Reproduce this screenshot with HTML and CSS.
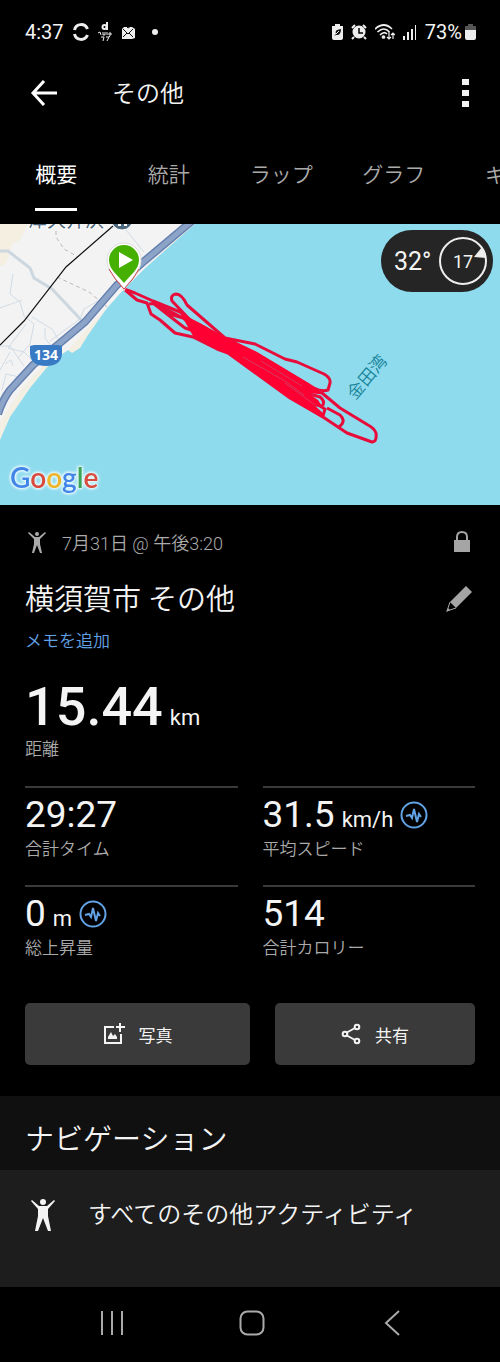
FILE: index.html
```
<!DOCTYPE html>
<html lang="ja">
<head>
  <meta charset="UTF-8">
  <meta name="viewport" content="width=device-width, initial-scale=1">
  <title>横須賀市 その他</title>
  <link rel="stylesheet" href="styles.css">
</head>
<body>
  <div class="status-bar">
    <div class="status-group">
      <span class="clock">4:37</span>
      <svg width="16" height="18" viewBox="0 0 16 18" fill="none" stroke="#eee" stroke-width="3"><path d="M1.500 7C3 0 12 0 14.500 6M1.500 11C3 18 12 18 14.500 12"/></svg>
      <svg width="14" height="20" viewBox="0 0 14 20" fill="none" stroke="#eee" stroke-width="1"><circle cx="6.500" cy="5" r="2" stroke-width="2"/><path d="M9 0v8" stroke-width="2"/><path d="M0 11l2-1 1 3M5 10v3h2v-3M9 10v3M11 11h2v2h-2zM3 15h3l-1 4M8 15h3l-2 4M11 14l1 1"/></svg>
      <svg width="14" height="15" viewBox="0 0 14 15"><path d="M1 4l2-2h8l3 2v9l-3 1H1z" fill="#eee"/><path d="M2 4l5 5 5-5M2 12l4-4M12 12L8 8M5 1l2 2 3-2" fill="none" stroke="#111"/></svg>
      <span class="status-dot"></span>
    </div>
    <div class="status-group status-right">
      <svg width="11" height="16" viewBox="0 0 11 16"><path d="M3 0h5v2h3v12q0 2-2 2H2q-2 0-2-2V2h3z" fill="#eee"/><path d="M2 12l2-2q-1-3 1-4l4-1q0 5-3 6H4" fill="#111"/><path d="M4 10l3-3" stroke="#eee"/></svg>
      <svg width="16" height="16" viewBox="0 0 16 16"><circle cx="8" cy="8" r="6.500" fill="#eee"/><path d="M1 4l3-3M15 4l-3-3M3 13l-2 2M13 13l2 2" stroke="#eee" stroke-width="2"/><path d="M8 4v5h4" fill="none" stroke="#000" stroke-width="1.500"/></svg>
      <svg width="20" height="17" viewBox="0 0 20 17" fill="none" stroke="#eee" stroke-width="1.700"><path d="M0 5Q9-3 17 5M2.500 8Q9 2 14.500 8M5 11Q9 7 12 10"/><circle cx="8.500" cy="13" r="1" fill="#eee"/><path d="M14 8v7M12 13l2 2 2-2M18 15V9M16 11l2-2 2 2" stroke-width="1.200"/></svg>
      <svg width="14" height="16" viewBox="0 0 14 16" fill="#eee"><path d="M0 12h2v4H0zM4 8h2v8H4zM8 5h2v11H8zM12 1h1v15h-1z"/></svg>
      <span class="battery">73%<svg width="11" height="16" viewBox="0 0 11 16"><path d="M3 0h5v2h3v5H0V2h3z" fill="#555"/><path d="M0 6h11v8q0 2-2 2H2q-2 0-2-2z" fill="#eee"/></svg></span>
    </div>
  </div>

  <header class="app-bar">
    <button class="icon-button" aria-label="戻る">
      <svg width="28" height="26" viewBox="0 0 28 26" fill="none" stroke="#fff" stroke-width="3"><path d="M14 1L3 13l11 12M3 13h24"/></svg>
    </button>
    <h1>その他</h1>
    <button class="icon-button menu-button" aria-label="メニュー">
      <svg width="8" height="28" viewBox="0 0 8 28" fill="#f4f4f4"><path d="M0 0h7v6H0zM0 11h7v6H0zM0 22h7v6H0z"/></svg>
    </button>
  </header>

  <nav class="tabs">
    <a href="#summary" class="tab active"><span>概要</span></a>
    <a href="#stats" class="tab"><span>統計</span></a>
    <a href="#laps" class="tab"><span>ラップ</span></a>
    <a href="#graph" class="tab"><span>グラフ</span></a>
    <a href="#gear" class="tab"><span>ギア</span></a>
  </nav>

  <div class="map">
    <svg class="map-canvas" viewBox="0 0 500 281" preserveAspectRatio="xMinYMin slice">
      <rect width="500" height="281" fill="#8fdbee"/>
      <!-- 陸地と砂浜 -->
      <path d="M0 0H195L143 46 123 66 107 84 88 111 80 124 72 129 68 126 53 136 30 164 10 193 0 216z" fill="#f4efe3"/>
      <path d="M0 0H192L143 46 123 66 107 84 86 106 68 126 45 140 22 164 0 198z" fill="#f3f3f3"/>
      <path d="M0 0H28L20 16 12 20 6 40 0 42z" fill="#f5efe1"/>
      <g fill="none" stroke="#d2dce5" stroke-width="1">
        <path d="M13 50l-3 20 10 8 4 14 10 8-4 20-12 14M0 84l22-8M32 93l20 12 8 13M26 100L8 124l16 4 10 10M50 117l30-22 4-10 24-14M126 6l18 22M0 122h10l14 20M0 146l10-18M2 166l4-16 18 4M45 104v10l6 8M5 140l6-4 2 6"/>
      </g>
      <path d="M0 27h8l22 17 4 10 18 11 32 34" fill="none" stroke="#ccd7df" stroke-width="3"/>
      <path d="M56 7v6l8 12 14 8M57 53l32 15 18 15" fill="none" stroke="#bbb" stroke-dasharray="4 3"/>
      <path d="M113 2L66 43 24 97 0 121" fill="none" stroke="#111" stroke-width="1.200"/>
      <path d="M192-3L142 39 117 61 85 98 60 119 33 141 10 166Q3 175-2 190" fill="none" stroke="#6681b0" stroke-width="8"/>
      <path d="M192-3L142 39 117 61 85 98 60 119 33 141 10 166Q3 175-2 190" fill="none" stroke="#8ca4c8" stroke-width="5"/>
      <text x="28" y="3" class="map-station">津久井浜</text>
      <circle cx="122" cy="-5" r="11" fill="#4d687c" stroke="#fff"/>
      <path d="M118 0h3v2h-3zM124 0h3v2h-3z" fill="#fff"/>
      <path d="M30 122l4-1h24l4 1v8q-1 12-16 12T30 130z" fill="#397ac4"/>
      <text x="46" y="136" class="map-route-no">134</text>

      <!-- 走行ルート -->
      <g fill="none" stroke="#e80c3b" stroke-width="3" stroke-linejoin="round">
        <path d="M124 65L135 69 153 77 180 88 197 101M225 114L255 120 285 135 297 138 324 150Q331 154 330 159L328 166Q322 168 314 164L257 130 225 114 187 81Q182 70 176 70Q170 71 172 77L195 101 225 116"/>
        <path d="M124 65L137 76 147 79 151 90 160 96 175 109 193 113 217 125 228 129 290 174 323 193 347 209 372 218Q377 218 376 209Q374 204 368 201L340 184 322 169 303 166"/>
        <path d="M153 79L172 94 185 104 197 108M149 80L157 79 170 90 183 94 195 103M160 82L185 95 200 104"/>
        <path d="M327 184L340 191Q345 196 342 200L338 204M303 168L320 173Q325 177 323 181Q320 184 303 176M318 181L325 185 323 192"/>
      </g>
      <path d="M180 89L200 99 225 113 257 128 310 160 322 170 308 169 318 176 322 182 313 180 324 190 322 194 290 175 228 130 216 125 193 112z" fill="#ff0033"/>
      <g fill="none" stroke="#d43a60" stroke-width="1">
        <path d="M261 137L302 162M243 133L285 157 304 171M285 159l30 22"/>
      </g>

      <path d="M124 67C120 55 107 50 107 36A17 17 0 0 1 141 36C141 50 128 55 124 67z" fill="#fff" stroke="#ddd"/>
      <path d="M109 45Q114 55 124 65Q134 55 139 45" fill="none" stroke="#c44"/>
      <path d="M124 59C118 51 109 46 109 36A15 15 0 0 1 139 36C139 46 130 51 124 59z" fill="#46b000"/>
      <path d="M119 28l14 8-14 8z" fill="#fff"/>
      <text x="367" y="153" class="map-bay" transform="rotate(-50 367 153)">金田湾</text>
      <text x="10" y="264" class="map-logo"><tspan fill="#4285e8">G</tspan><tspan fill="#d94b3e">o</tspan><tspan fill="#edb52a">o</tspan><tspan fill="#4285e8">g</tspan><tspan fill="#3ca456">l</tspan><tspan fill="#d94b3e">e</tspan></text>
    </svg>
    <div class="weather">
      <span>32°</span>
      <span class="wind">
        <svg width="48" height="48" viewBox="0 0 48 48"><circle cx="24" cy="24" r="23" fill="none" stroke="#eee" stroke-width="2"/><path d="M43 10L35 20 47 21z" fill="#eee"/></svg>
        <span class="wind-speed">17</span>
      </span>
    </div>
  </div>

  <main class="summary" id="summary">
    <div class="row meta">
      <svg width="24" height="24" viewBox="0 0 24 24" fill="#aaa"><circle cx="12" cy="4" r="2"/><path d="M4 2l6 5h4l6-5 1 1-6 6v5l2 9h-2l-3-8-3 8H7l2-9V9L3 3z"/></svg>
      <span>7月31日 @ 午後3:20</span>
      <svg class="row-end" width="18" height="22" viewBox="0 0 18 22"><path d="M4 10V6Q4 1 9 1T14 6V10" fill="none" stroke="#a5a5a5" stroke-width="2"/><path d="M1 9h16v12H1z" fill="#a5a5a5"/></svg>
    </div>
    <div class="row title-row">
      <h2>横須賀市 その他</h2>
      <button class="icon-button row-end" aria-label="編集">
        <svg width="28" height="28" viewBox="0 0 28 28"><path d="M21 0l6 6L11 22 5 16z" fill="#a5a5a5"/><path d="M5 16L2 25l9-3" fill="none" stroke="#a5a5a5"/><path d="M3 22l-2 4 4-2z" fill="#a5a5a5"/></svg>
      </button>
    </div>
    <a href="#memo" class="memo">メモを追加</a>

    <div class="distance">
      <div class="value distance-value">15.44<small>km</small></div>
      <div class="label">距離</div>
    </div>

    <div class="stats">
      <div class="stat">
        <div class="value">29:27</div>
        <div class="label">合計タイム</div>
      </div>
      <div class="stat">
        <div class="value">31.5<small>km/h</small>
          <svg width="28" height="28" viewBox="0 0 28 28" fill="none" stroke="#62a2e6" stroke-width="2"><circle cx="14" cy="14" r="12.500"/><path d="M6 15l4-1 2 3 2-9 3 13 2-8 2 3"/></svg>
        </div>
        <div class="label">平均スピード</div>
      </div>
      <div class="stat">
        <div class="value">0<small>m</small>
          <svg width="28" height="28" viewBox="0 0 28 28" fill="none" stroke="#62a2e6" stroke-width="2"><circle cx="14" cy="14" r="12.500"/><path d="M6 15l4-1 2 3 2-9 3 13 2-8 2 3"/></svg>
        </div>
        <div class="label">総上昇量</div>
      </div>
      <div class="stat">
        <div class="value">514</div>
        <div class="label">合計カロリー</div>
      </div>
    </div>

    <div class="actions">
      <button class="action photo">
        <svg width="22" height="22" viewBox="0 0 22 22" fill="none" stroke="#f4f4f4" stroke-width="2"><path d="M11 4H2v16h16v-9M17 0v9M13 4h9"/><path d="M5 16v-2l3-5 2 4 2-2 2 3v2z" fill="#f4f4f4" stroke="none"/></svg>
        写真
      </button>
      <button class="action share">
        <svg width="20" height="22" viewBox="0 0 20 22" fill="none" stroke="#f4f4f4" stroke-width="2"><path d="M5 10l9-5M5 12l9 5"/><circle cx="4" cy="11" r="2.300"/><circle cx="16" cy="4" r="2.300"/><circle cx="16" cy="18" r="2.300"/></svg>
        共有
      </button>
    </div>
  </main>

  <h2 class="section-title">ナビゲーション</h2>
  <div class="nav-list">
    <a href="#all" class="nav-item">
      <svg width="26" height="34" viewBox="0 0 26 34" fill="#f4f4f4"><circle cx="13" cy="4" r="3"/><path d="M2 2l7 6h8l7-6 1 1-7 8v7l3 15h-3l-5-13-5 13H5l3-15v-7L1 3z"/></svg>
      すべてのその他アクティビティ
    </a>
  </div>

  <div class="system-nav">
    <button class="icon-button" aria-label="最近使ったアプリ">
      <svg width="26" height="26" viewBox="0 0 26 26" stroke="#aaa" stroke-width="2"><path d="M3 1v24M13 1v24M23 1v24"/></svg>
    </button>
    <button class="icon-button" aria-label="ホーム">
      <svg width="26" height="26" viewBox="0 0 26 26" fill="none" stroke="#aaa" stroke-width="2"><rect x="1.500" y="1.500" width="23" height="23" rx="7"/></svg>
    </button>
    <button class="icon-button" aria-label="前に戻る">
      <svg width="26" height="26" viewBox="0 0 26 26" fill="none" stroke="#aaa" stroke-width="2"><path d="M20 1L7 13l13 12"/></svg>
    </button>
  </div>
</body>
</html>
```
FILE: styles.css
```
* {
  box-sizing: border-box;
}
body {
  margin: 0;
  min-height: 100vh;
  display: flex;
  flex-direction: column;
  background: #000;
  color: #f4f4f4;
  font-family: Roboto, "Noto Sans CJK JP", sans-serif;
  font-size: 17px;
  overflow-x: hidden;
}
svg {
  display: block;
  flex: none;
}
h1, h2 {
  margin: 0;
  font-weight: 350;
}
a {
  color: inherit;
  text-decoration: none;
}
button {
  border: none;
  color: inherit;
  font: inherit;
  cursor: pointer;
}
.icon-button {
  display: flex;
  align-items: center;
  justify-content: center;
  padding: 0;
  background: none;
}

/* ステータスバー */
.status-bar {
  display: flex;
  justify-content: space-between;
  height: 64px;
  padding: 0 24px 0 25px;
}
.status-group {
  display: flex;
  align-items: center;
  gap: 9px;
  font-size: 20px;
}
.status-dot {
  width: 6px;
  height: 6px;
  margin-left: 8px;
  border-radius: 50%;
  background: #eee;
}
.status-right {
  gap: 8px;
}
.battery {
  display: flex;
  align-items: center;
  gap: 3px;
}

.app-bar {
  display: flex;
  align-items: center;
  height: 58px;
  padding: 0 30px;
}
.app-bar h1 {
  margin-left: 54px;
  padding-top: 2px;
  font-size: 24px;
  line-height: 32px;
}
.menu-button {
  margin-left: auto;
}

.tabs {
  display: flex;
  padding: 20px 0 13px;
  overflow: hidden;
}
.tab {
  flex: 0 0 22.5%;
  display: flex;
  justify-content: center;
  color: #aaa;
  font-size: 21px;
  font-weight: 350;
  line-height: 66px;
}
.tab span {
  border-bottom: 3px solid transparent;
}
.tab.active span {
  color: #fff;
  font-weight: 400;
  border-color: #fff;
}

/* 地図 */
.map {
  position: relative;
}
.map-canvas {
  width: 100%;
}
.map text {
  font-family: Roboto, "Noto Sans CJK JP", sans-serif;
  paint-order: stroke;
}
.map .map-station {
  font-size: 19px;
  fill: #4d687c;
  stroke: #fff;
  stroke-width: 2px;
}
.map .map-route-no {
  font-family: "Open Sans", sans-serif;
  font-size: 14px;
  font-weight: 700;
  fill: #fff;
  text-anchor: middle;
}
.map .map-bay {
  font-size: 17px;
  font-weight: 350;
  fill: #168398;
  text-anchor: middle;
  dominant-baseline: central;
}
.map .map-logo {
  font-family: Lato, sans-serif;
  font-size: 28px;
  font-weight: 600;
  filter: drop-shadow(0 0 1px #e4f7fb) drop-shadow(0 0 1px #e4f7fb) drop-shadow(0 0 1px #e4f7fb);
}
.weather {
  position: absolute;
  top: 6px;
  right: 7px;
  display: flex;
  align-items: center;
  justify-content: space-between;
  width: 112px;
  height: 62px;
  padding: 0 6px 0 13px;
  border-radius: 31px;
  background: #252525;
  font-size: 25px;
}
.wind {
  display: grid;
  place-items: center;
}
.wind > * {
  grid-area: 1 / 1;
}
.wind-speed {
  font-size: 18px;
}

.summary {
  padding: 21px 25px 31px;
}
.row {
  display: flex;
  align-items: center;
}
.row-end {
  margin-left: auto;
}
.meta {
  height: 32px;
  padding-right: 4px;
  gap: 13px;
  color: #aaa;
  font-size: 18px;
  font-weight: 350;
}
.title-row {
  height: 40px;
  margin: 22px 0 9px;
  padding-right: 2px;
}
.title-row h2 {
  font-size: 29px;
  line-height: 40px;
}
.memo {
  display: block;
  color: #62a2e6;
  font-weight: 350;
  line-height: 24px;
}
.label {
  color: #aaa;
  font-weight: 350;
  line-height: 26px;
}
.distance {
  margin: 25px 0 24px;
}
.stats {
  display: grid;
  grid-template-columns: 1fr 1fr;
  column-gap: 25px;
}
.stat {
  padding: 6px 0 23px;
  border-top: 2px solid #3a3a3a;
}
.value {
  display: flex;
  align-items: baseline;
  gap: 7px;
  height: 42px;
  font-size: 37px;
  line-height: 42px;
}
.value small {
  font-size: 22px;
  font-weight: 400;
  line-height: 22px;
}
.value svg {
  align-self: center;
}
.distance-value {
  height: 58px;
  font-size: 54px;
  font-weight: 500;
  line-height: 58px;
}
.actions {
  display: flex;
  gap: 25px;
  margin-top: 19px;
}
.action {
  display: flex;
  align-items: center;
  justify-content: center;
  gap: 14px;
  height: 62px;
  padding: 0;
  border-radius: 5px;
  background: #3a3a3a;
}
.photo {
  flex: 9;
}
.share {
  flex: 8;
}

.section-title {
  padding: 24px 25px 10px;
  background: #101010;
  font-size: 29px;
  line-height: 40px;
}
.nav-list {
  flex: 1;
  padding: 23px 30px 50px;
  background: #1d1d1d;
}
.nav-item {
  display: flex;
  align-items: center;
  gap: 32px;
  font-size: 24px;
  font-weight: 350;
  line-height: 44px;
}
.system-nav {
  display: grid;
  grid-template-columns: repeat(3, 1fr);
  height: 75px;
  padding: 0 38px 3px 42px;
}
```
